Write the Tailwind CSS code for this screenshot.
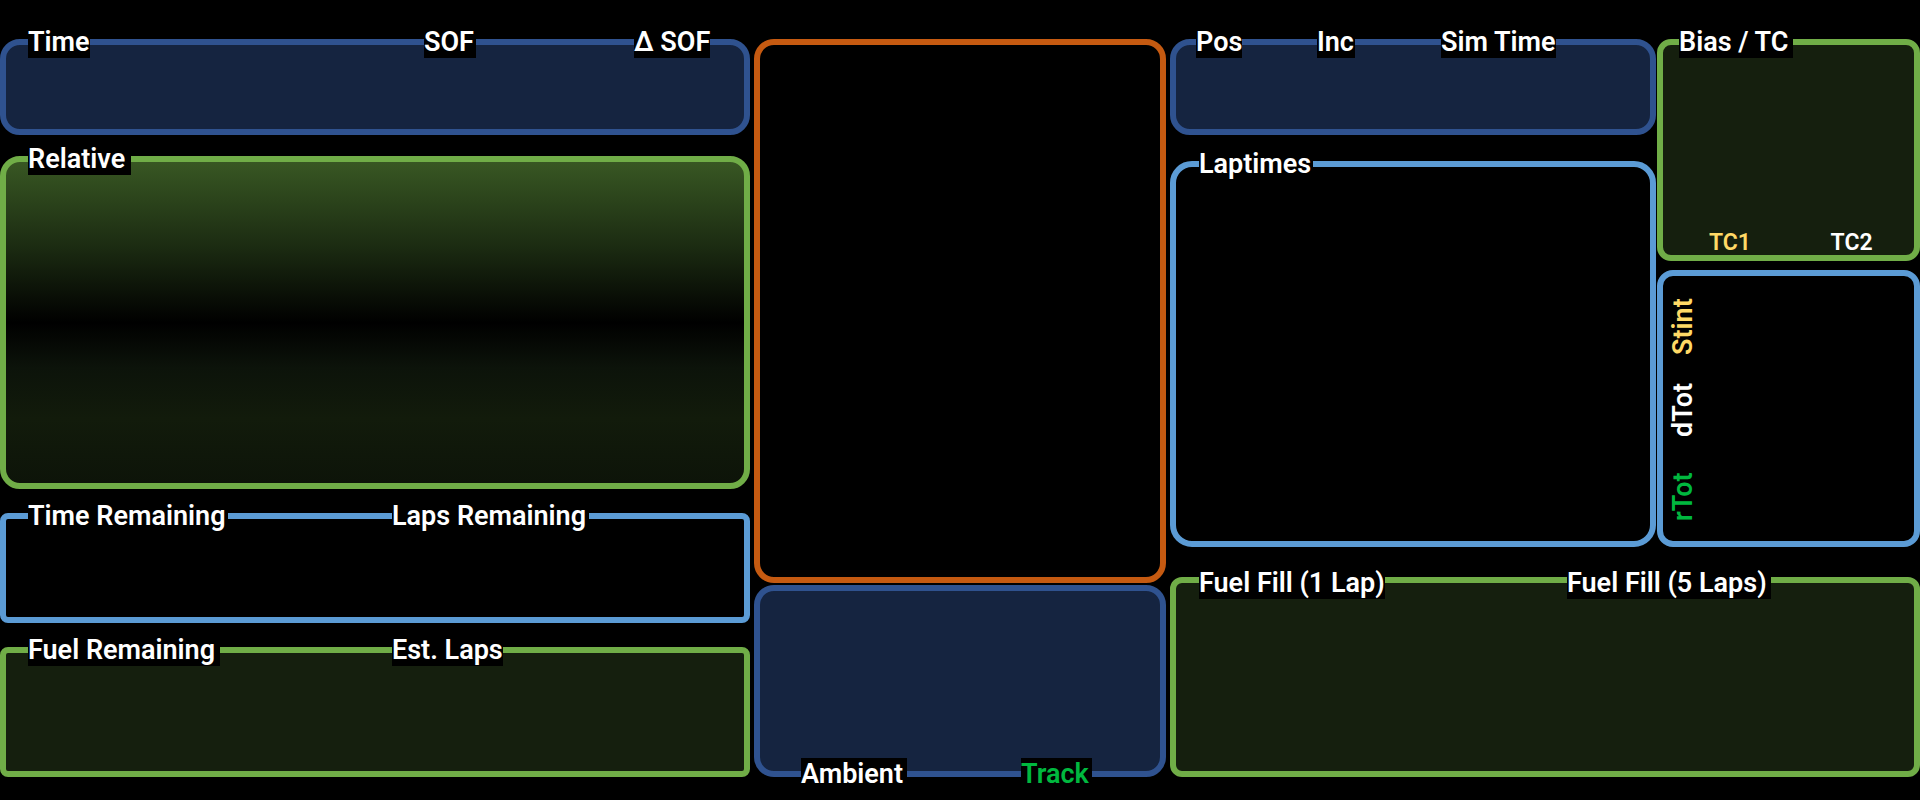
<!DOCTYPE html>
<html lang="en">
<head>
<meta charset="utf-8">
<title>Race Dashboard</title>
<script src="https://cdn.jsdelivr.net/npm/@tailwindcss/browser@4"></script>
</head>
<body class="bg-black font-['Roboto','Liberation_Sans',sans-serif] text-[27px] leading-8 font-semibold whitespace-nowrap text-white">
<main class="grid min-h-screen grid-cols-[750fr_412fr_750fr] items-start gap-x-1 pt-[39px] pb-5">

  <!-- Left column -->
  <div class="flex flex-col gap-6">
    <div class="flex flex-col gap-[21px]">
      <section class="min-h-24 rounded-[20px] border-6 border-[#2f528f] bg-[#152440]">
        <div class="-mt-[19px] grid grid-cols-[396fr_210fr_110fr] justify-items-start pl-[22px]">
          <h2 class="min-w-[62px] bg-black">Time</h2>
          <h2 class="min-w-[52px] bg-black">SOF</h2>
          <h2 class="min-w-[76px] bg-black">Δ SOF</h2>
        </div>
      </section>
      <section class="min-h-[333px] rounded-[20px] border-6 border-[#70ad47] bg-linear-[180deg,#385723_0%,#1c2c12_26%,#000000_50%,#0c130a_64%,#121b0b_80%,#0d1409_100%] bg-origin-padding">
        <div class="-mt-[19px] flex pl-[22px]">
          <h2 class="min-w-[103px] bg-black">Relative</h2>
        </div>
      </section>
    </div>
    <section class="min-h-[110px] rounded-lg border-6 border-[#5b9bd5]">
      <div class="-mt-[19px] grid grid-cols-[364fr_352fr] justify-items-start pl-[22px]">
        <h2 class="min-w-[200px] bg-black">Time Remaining</h2>
        <h2 class="min-w-[197px] bg-black">Laps Remaining</h2>
      </div>
    </section>
    <section class="min-h-[130px] rounded-lg border-6 border-[#70ad47] bg-[#151f0e]">
      <div class="-mt-[19px] grid grid-cols-[364fr_352fr] justify-items-start pl-[22px]">
        <h2 class="min-w-[192px] bg-black">Fuel Remaining</h2>
        <h2 class="min-w-[111px] bg-black">Est. Laps</h2>
      </div>
    </section>
  </div>

  <!-- Middle column -->
  <div class="flex flex-col gap-0.5">
    <section class="min-h-[544px] rounded-[20px] border-6 border-[#c55a11]" aria-label="Gear"></section>
    <section class="flex min-h-48 flex-col justify-end rounded-[20px] border-6 border-[#2f528f] bg-[#152440]">
      <div class="-mb-[19px] grid grid-cols-[220fr_139fr] justify-items-start pl-[41px]">
        <h2 class="min-w-[106px] bg-black">Ambient</h2>
        <h2 class="min-w-[71px] bg-black text-[#00b83f]">Track</h2>
      </div>
    </section>
  </div>

  <!-- Right column -->
  <div class="flex flex-col gap-[30px]">
    <div class="grid grid-cols-[486fr_263fr] gap-px">
      <div class="flex flex-col gap-[26px]">
        <section class="min-h-24 rounded-[20px] border-6 border-[#2f528f] bg-[#152440]">
          <div class="-mt-[19px] grid grid-cols-[121fr_124fr_209fr] justify-items-start pl-5">
            <h2 class="min-w-[46px] bg-black">Pos</h2>
            <h2 class="min-w-[38px] bg-black">Inc</h2>
            <h2 class="min-w-[115px] bg-black">Sim Time</h2>
          </div>
        </section>
        <section class="min-h-[386px] rounded-[22px] border-6 border-[#5b9bd5]">
          <div class="-mt-[19px] flex pl-[23px]">
            <h2 class="min-w-[114px] bg-black">Laptimes</h2>
          </div>
        </section>
      </div>
      <div class="flex flex-col gap-[9px]">
        <section class="flex min-h-[222px] flex-col justify-between rounded-[14px] border-6 border-[#70ad47] bg-[#151f0e]">
          <div class="-mt-[19px] flex pl-4">
            <h2 class="min-w-[114px] bg-black">Bias / TC</h2>
          </div>
          <div class="grid grid-cols-[121fr_83fr] justify-items-start pl-[46px] text-[23px] leading-6">
            <h3 class="text-[#ffd966]">TC1</h3>
            <h3>TC2</h3>
          </div>
        </section>
        <section class="flex min-h-[277px] items-stretch rounded-2xl border-6 border-[#5b9bd5] pt-[22px] pb-[20px] pl-1">
          <div class="flex rotate-180 items-center justify-between [writing-mode:vertical-rl]">
            <h3 class="text-[#00b83f]">rTot</h3>
            <h3 class="ps-2">dTot</h3>
            <h3 class="text-[#ffd966]">Stint</h3>
          </div>
        </section>
      </div>
    </div>
    <section class="min-h-[200px] rounded-xl border-6 border-[#70ad47] bg-[#151f0e]">
      <div class="-mt-4 grid grid-cols-[368fr_347fr] justify-items-start pl-[23px]">
        <h2 class="min-w-[185px] bg-black">Fuel Fill (1 Lap)</h2>
        <h2 class="min-w-[204px] bg-black">Fuel Fill (5 Laps)</h2>
      </div>
    </section>
  </div>
</main>
</body>
</html>
